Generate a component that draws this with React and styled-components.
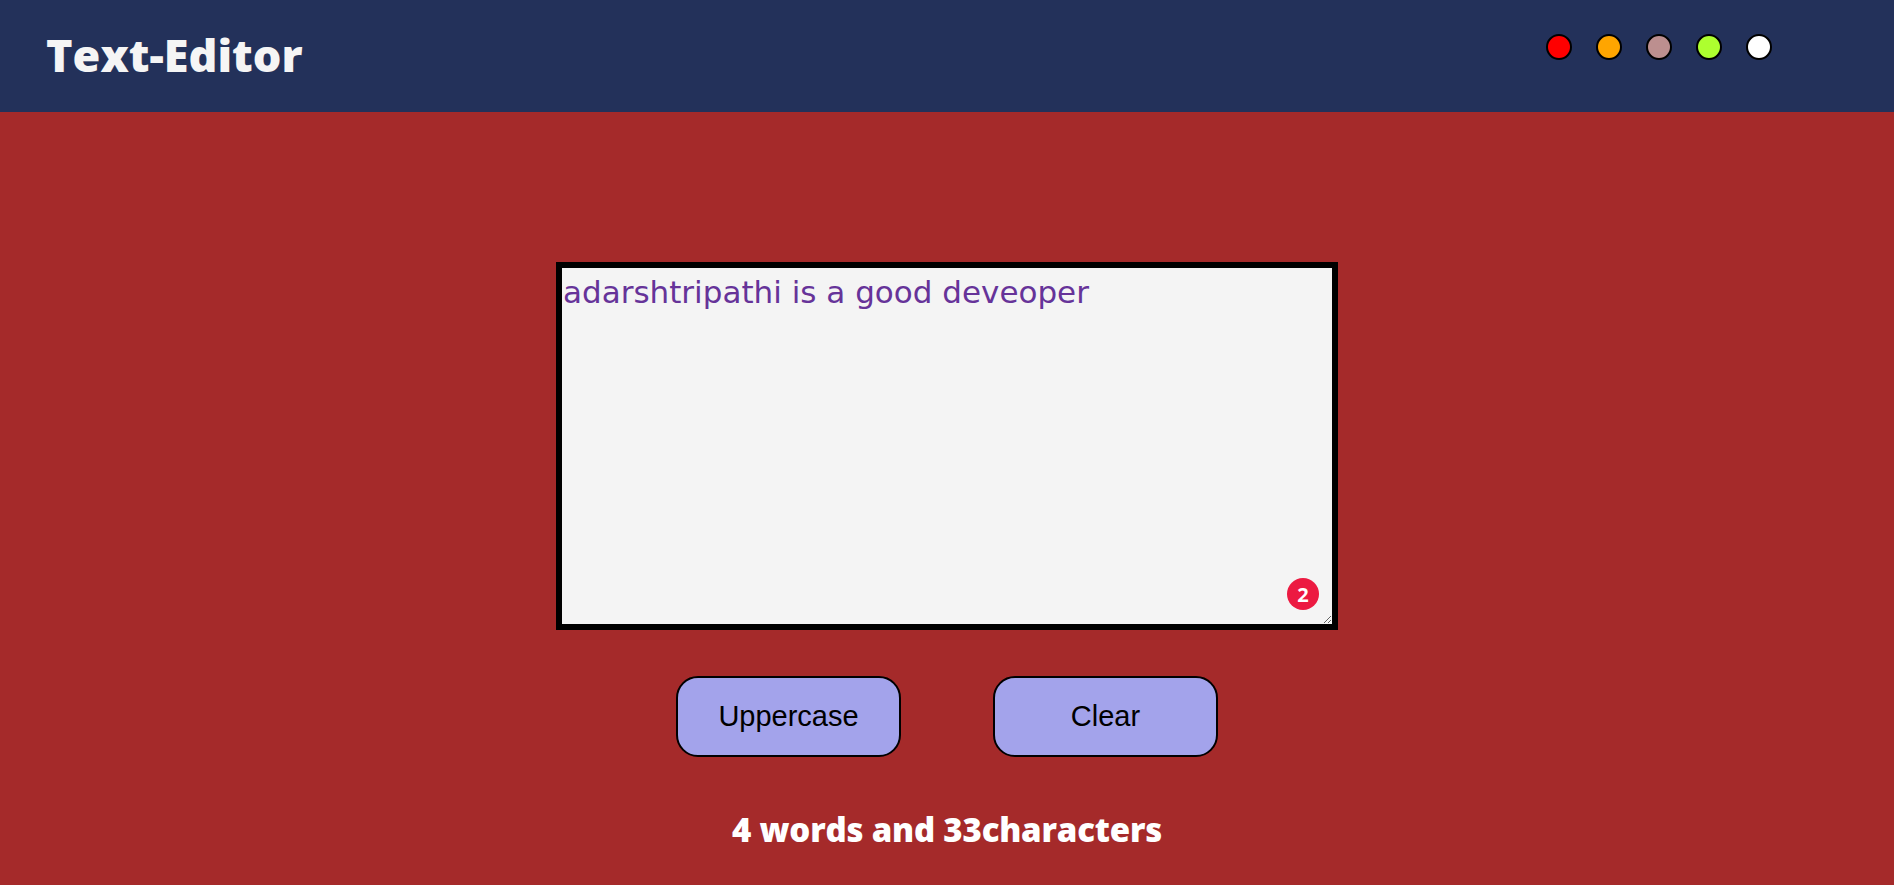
import React, { useState } from "react";
import styled, { createGlobalStyle } from "styled-components";

const swatches = ["#ff0000", "#ffa500", "#bc8f8f", "#adff2f", "#ffffff"];

const App = () => {
  const [text, setText] = useState("adarshtripathi is a good deveoper");
  const [mode, setMode] = useState("#a52a2a");

  // same count the original shows (spaces)
  const words = text.split(" ").length - 1;

  return (
    <>
      <GlobalStyle bg={mode} />
      <Navbar>
        <Brand>Text-Editor</Brand>
        <Swatches>
          {swatches.map((c) => (
            <Swatch key={c} color={c} onClick={() => setMode(c)} />
          ))}
        </Swatches>
      </Navbar>
      <Main>
        <EditorBox>
          <Editor
            value={text}
            onChange={(e) => setText(e.target.value)}
            spellCheck="true"
          />
          <Badge>2</Badge>
        </EditorBox>
        <Actions>
          <ActionButton onClick={() => setText(text.toUpperCase())}>Uppercase</ActionButton>
          <ActionButton onClick={() => setText("")}>Clear</ActionButton>
        </Actions>
        <Summary>
          {words} words and {text.length}characters
        </Summary>
      </Main>
    </>
  );
};

export default App;

// Styled Components
const GlobalStyle = createGlobalStyle`
  body {
    margin: 0;
    background-color: ${(p) => p.bg};
    min-height: 100vh;
    font-family: "Open Sans", "Liberation Sans", sans-serif;
  }
`;

const Navbar = styled.nav`
  height: 112px;
  background-color: #23315a;
  display: flex;
  align-items: center;
  justify-content: space-between;
  padding: 0 122px 0 46px;
  box-sizing: border-box;
`;

const Brand = styled.h1`
  margin: 0 0 4px;
  color: #f5f5f5;
  font-family: "Open Sans", sans-serif;
  font-weight: 800;
  font-size: 45px;
  letter-spacing: 0;
`;

const Swatches = styled.div`
  display: flex;
  gap: 24px;
  margin-bottom: 18px;
`;

const Swatch = styled.div`
  width: 26px;
  height: 26px;
  border-radius: 50%;
  border: 2px solid #000;
  box-sizing: border-box;
  background-color: ${(p) => p.color};
  cursor: pointer;
`;

const Main = styled.main`
  display: flex;
  flex-direction: column;
  align-items: center;
  padding-top: 150px;
`;

const EditorBox = styled.div`
  position: relative;
  width: 782px;
  height: 368px;
`;

const Editor = styled.textarea`
  width: 100%;
  height: 100%;
  box-sizing: border-box;
  border: 6px solid #000;
  background-color: #f4f4f4;
  color: #663399;
  font-family: "Comic Sans MS", "DejaVu Sans", sans-serif;
  font-size: 31px;
  padding: 6px 1px 2px;
  outline: none;
  display: block;
`;

const Badge = styled.span`
  position: absolute;
  right: 19px;
  bottom: 20px;
  width: 32px;
  height: 32px;
  border-radius: 50%;
  background-color: #ec1a41;
  color: #fff;
  font-family: "Open Sans", sans-serif;
  font-weight: 700;
  font-size: 20px;
  display: flex;
  align-items: center;
  justify-content: center;
`;

const Actions = styled.div`
  display: flex;
  gap: 92px;
  margin-top: 46px;
`;

const ActionButton = styled.button`
  width: 225px;
  height: 81px;
  background-color: #a3a3eb;
  border: 2px solid #000;
  border-radius: 22px;
  font-family: "Liberation Sans", Arial, sans-serif;
  font-size: 29px;
  color: #000;
  cursor: pointer;
`;

const Summary = styled.h2`
  margin: 50px 0 0;
  color: #fff;
  font-family: "Open Sans", sans-serif;
  font-weight: 800;
  font-size: 33px;
  letter-spacing: -0.2px;
`;
